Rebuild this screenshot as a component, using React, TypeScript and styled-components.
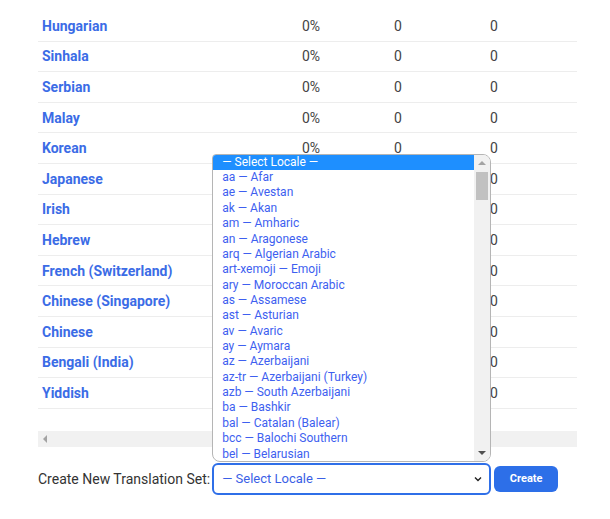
import React from "react";
import styled, { createGlobalStyle } from "styled-components";

const GlobalStyle = createGlobalStyle`
  body {
    margin: 0;
    background: #fff;
    font-family: Roboto, "Liberation Sans", sans-serif;
  }
`;

const Page = styled.div`
  width: 610px;
  height: 519px;
  padding: 11px 33px 0 38px;
  box-sizing: border-box;
  overflow: hidden;
`;

const Table = styled.div`
  display: flex;
  flex-direction: column;
`;

const Row = styled.div`
  display: grid;
  grid-template-columns: 260px 92px 96px 1fr;
  align-items: center;
  height: 30.6px;
  box-sizing: border-box;
  border-bottom: 1px solid #ededed;
  padding: 0 0 0 4px;
  font-size: 14px;
  color: #444;
`;

const LangName = styled.a`
  color: #3b6ce6;
  font-weight: 700;
  text-decoration: none;
`;

const HScroll = styled.div`
  margin-top: 22px;
  height: 16px;
  background: #f1f1f1;
  display: flex;
  align-items: center;
  padding-left: 5px;
`;

const ArrowLeft = styled.span`
  width: 0;
  height: 0;
  border-top: 4px solid transparent;
  border-bottom: 4px solid transparent;
  border-right: 4px solid #a3a3a3;
`;

const Form = styled.div`
  display: flex;
  align-items: center;
  margin-top: 16px;
`;

const Label = styled.label`
  font-size: 14px;
  color: #333;
  margin-right: 2px;
`;

const SelectWrap = styled.div`
  position: relative;
  width: 279px;
`;

const SelectBox = styled.div`
  height: 32px;
  box-sizing: border-box;
  border: 2px solid #2f6fe8;
  border-radius: 6px;
  display: flex;
  align-items: center;
  justify-content: space-between;
  padding: 0 6px 0 8px;
  font-size: 13px;
  color: #3b5fe6;
`;

const Listbox = styled.div`
  position: absolute;
  left: 0;
  bottom: calc(100% + 1px);
  width: 279px;
  height: 308px;
  box-sizing: border-box;
  border: 1px solid #b5b5b5;
  border-radius: 4px 8px 8px 8px;
  background: #fff;
  display: flex;
  overflow: hidden;
`;

const Options = styled.ul`
  list-style: none;
  margin: 0;
  padding: 0;
  flex: 1;
`;

const Option = styled.li<{ $selected?: boolean }>`
  height: 15.37px;
  line-height: 15.37px;
  padding-left: 9px;
  font-size: 12px;
  white-space: nowrap;
  color: ${(p) => (p.$selected ? "#fff" : "#3e5ff0")};
  background: ${(p) => (p.$selected ? "#1e8fff" : "transparent")};
`;

const VScroll = styled.div`
  width: 16px;
  background: #f1f1f1;
  display: flex;
  flex-direction: column;
  align-items: center;
`;

const ArrowUp = styled.span`
  margin-top: 6px;
  border-left: 4px solid transparent;
  border-right: 4px solid transparent;
  border-bottom: 4px solid #a3a3a3;
`;

const Thumb = styled.div`
  width: 12px;
  height: 28px;
  margin-top: 7px;
  background: #c1c1c1;
`;

const ArrowDown = styled.span`
  margin-top: auto;
  margin-bottom: 6px;
  border-left: 4px solid transparent;
  border-right: 4px solid transparent;
  border-top: 4px solid #505050;
`;

const CreateButton = styled.button`
  margin-left: 3px;
  width: 64px;
  height: 26px;
  border: none;
  border-radius: 6px;
  background: #2d6fe8;
  color: #fff;
  font-family: Roboto, "Liberation Sans", sans-serif;
  font-weight: 700;
  font-size: 11px;
  cursor: pointer;
`;

const languages = [
  "Hungarian",
  "Sinhala",
  "Serbian",
  "Malay",
  "Korean",
  "Japanese",
  "Irish",
  "Hebrew",
  "French (Switzerland)",
  "Chinese (Singapore)",
  "Chinese",
  "Bengali (India)",
  "Yiddish",
];

const locales = [
  "aa — Afar",
  "ae — Avestan",
  "ak — Akan",
  "am — Amharic",
  "an — Aragonese",
  "arq — Algerian Arabic",
  "art-xemoji — Emoji",
  "ary — Moroccan Arabic",
  "as — Assamese",
  "ast — Asturian",
  "av — Avaric",
  "ay — Aymara",
  "az — Azerbaijani",
  "az-tr — Azerbaijani (Turkey)",
  "azb — South Azerbaijani",
  "ba — Bashkir",
  "bal — Catalan (Balear)",
  "bcc — Balochi Southern",
  "bel — Belarusian",
];

function Chevron() {
  return (
    <svg width="10" height="10" viewBox="0 0 10 10" fill="none">
      <path d="M2 3.5L5 6.5L8 3.5" stroke="#222" strokeWidth="1.4" />
    </svg>
  );
}

export default function App() {
  return (
    <>
      <GlobalStyle />
      <Page>
        <Table>
          {languages.map((name) => (
            <Row key={name}>
              <LangName href="#">{name}</LangName>
              <span>0%</span>
              <span>0</span>
              <span>0</span>
            </Row>
          ))}
        </Table>
        <HScroll>
          <ArrowLeft />
        </HScroll>
        <Form>
          <Label>Create New Translation Set:</Label>
          <SelectWrap>
            <Listbox>
              <Options>
                <Option $selected>— Select Locale —</Option>
                {locales.map((l) => (
                  <Option key={l}>{l}</Option>
                ))}
              </Options>
              <VScroll>
                <ArrowUp />
                <Thumb />
                <ArrowDown />
              </VScroll>
            </Listbox>
            <SelectBox>
              <span>— Select Locale —</span>
              <Chevron />
            </SelectBox>
          </SelectWrap>
          <CreateButton>Create</CreateButton>
        </Form>
      </Page>
    </>
  );
}
